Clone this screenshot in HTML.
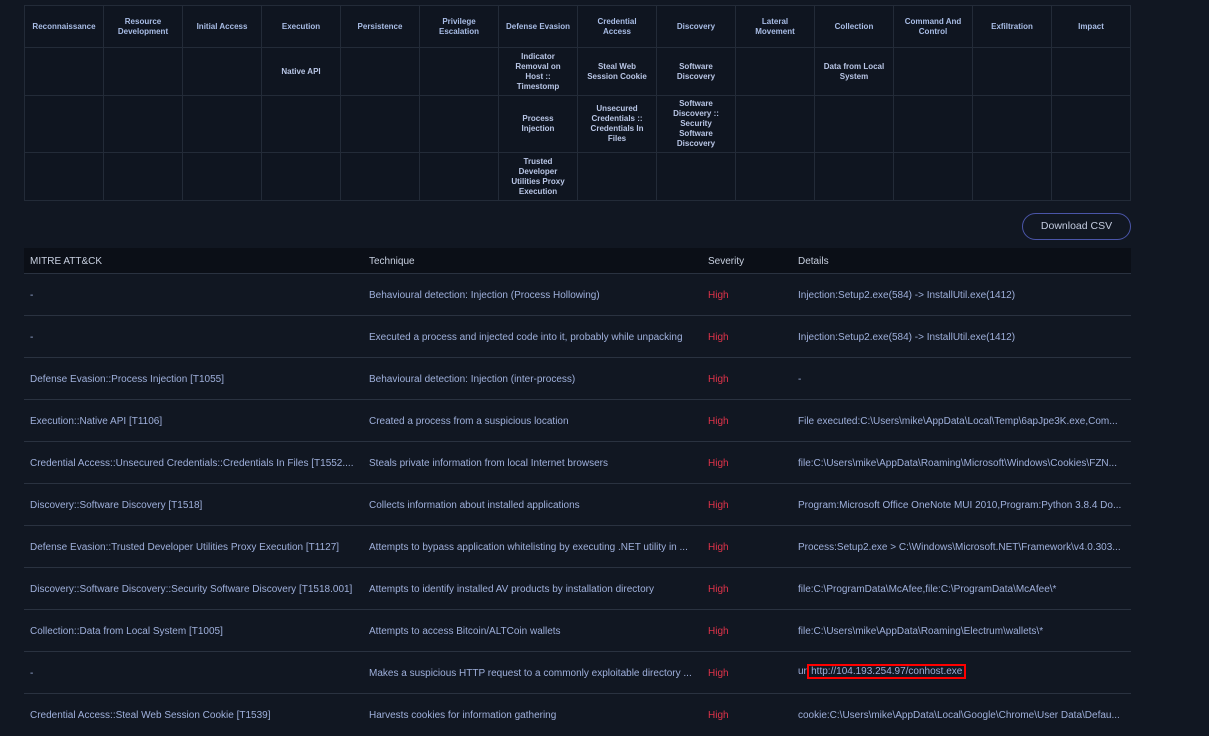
<!DOCTYPE html>
<html><head><meta charset="utf-8"><style>
*{margin:0;padding:0;box-sizing:border-box}
body{width:1209px;height:730px;overflow:hidden;background:#111722;font-family:"Liberation Sans",sans-serif;position:relative}
table.m{position:absolute;left:24px;top:5px;border-collapse:collapse;width:1107px;table-layout:fixed;background:#0f1520}
table.m td{border:1px solid #232b38;text-align:center;vertical-align:middle;color:#b9c6e6;font-size:8px;font-weight:bold;line-height:10px;padding:0 2px;white-space:nowrap}
table.m tr:first-child td{color:#a9bde6}
.btn{position:absolute;left:1022px;top:213px;width:109px;height:27px;border:1px solid #4a55a8;border-radius:14px;color:#c4cce0;font-size:10.5px;text-align:center;line-height:25px}
.r{position:absolute;left:24px;width:1107px;border-bottom:1px solid #2a3240;font-size:10px;color:#9fb0dc;white-space:nowrap}
.r span{position:absolute;top:0}
.h{background:#0b0f17;color:#c8d0e0;font-size:10px}
.hi{color:#e0334a}
.box{border:2px solid #f00;padding:0 2px;margin-left:-2px}
</style></head><body>
<table class="m">
<tr style="height:42px"><td>Reconnaissance</td><td>Resource<br>Development</td><td>Initial Access</td><td>Execution</td><td>Persistence</td><td>Privilege<br>Escalation</td><td>Defense Evasion</td><td>Credential<br>Access</td><td>Discovery</td><td>Lateral<br>Movement</td><td>Collection</td><td>Command And<br>Control</td><td>Exfiltration</td><td>Impact</td></tr>
<tr style="height:48px"><td></td><td></td><td></td><td>Native API</td><td></td><td></td><td>Indicator<br>Removal on<br>Host ::<br>Timestomp</td><td>Steal Web<br>Session Cookie</td><td>Software<br>Discovery</td><td></td><td>Data from Local<br>System</td><td></td><td></td><td></td></tr>
<tr style="height:57px"><td></td><td></td><td></td><td></td><td></td><td></td><td>Process<br>Injection</td><td>Unsecured<br>Credentials ::<br>Credentials In<br>Files</td><td>Software<br>Discovery ::<br>Security<br>Software<br>Discovery</td><td></td><td></td><td></td><td></td><td></td></tr>
<tr style="height:48px"><td></td><td></td><td></td><td></td><td></td><td></td><td>Trusted<br>Developer<br>Utilities Proxy<br>Execution</td><td></td><td></td><td></td><td></td><td></td><td></td><td></td></tr>
</table>
<div class="btn">Download CSV</div>
<div class="r h" style="top:248px;height:26px"><span style="left:6px;top:8px">MITRE ATT&amp;CK</span><span style="left:345px;top:8px">Technique</span><span style="left:684px;top:8px">Severity</span><span style="left:774px;top:8px">Details</span></div>
<div class="r" style="top:274px;height:42px"><span style="left:6px;top:16px">-</span><span style="left:345px;top:16px">Behavioural detection: Injection (Process Hollowing)</span><span class="hi" style="left:684px;top:16px">High</span><span style="left:774px;top:16px">Injection:Setup2.exe(584) -&gt; InstallUtil.exe(1412)</span></div>
<div class="r" style="top:316px;height:42px"><span style="left:6px;top:16px">-</span><span style="left:345px;top:16px">Executed a process and injected code into it, probably while unpacking</span><span class="hi" style="left:684px;top:16px">High</span><span style="left:774px;top:16px">Injection:Setup2.exe(584) -&gt; InstallUtil.exe(1412)</span></div>
<div class="r" style="top:358px;height:42px"><span style="left:6px;top:16px">Defense Evasion::Process Injection [T1055]</span><span style="left:345px;top:16px">Behavioural detection: Injection (inter-process)</span><span class="hi" style="left:684px;top:16px">High</span><span style="left:774px;top:16px">-</span></div>
<div class="r" style="top:400px;height:42px"><span style="left:6px;top:16px">Execution::Native API [T1106]</span><span style="left:345px;top:16px">Created a process from a suspicious location</span><span class="hi" style="left:684px;top:16px">High</span><span style="left:774px;top:16px">File executed:C:\Users\mike\AppData\Local\Temp\6apJpe3K.exe,Com...</span></div>
<div class="r" style="top:442px;height:42px"><span style="left:6px;top:16px">Credential Access::Unsecured Credentials::Credentials In Files [T1552....</span><span style="left:345px;top:16px">Steals private information from local Internet browsers</span><span class="hi" style="left:684px;top:16px">High</span><span style="left:774px;top:16px">file:C:\Users\mike\AppData\Roaming\Microsoft\Windows\Cookies\FZN...</span></div>
<div class="r" style="top:484px;height:42px"><span style="left:6px;top:16px">Discovery::Software Discovery [T1518]</span><span style="left:345px;top:16px">Collects information about installed applications</span><span class="hi" style="left:684px;top:16px">High</span><span style="left:774px;top:16px">Program:Microsoft Office OneNote MUI 2010,Program:Python 3.8.4 Do...</span></div>
<div class="r" style="top:526px;height:42px"><span style="left:6px;top:16px">Defense Evasion::Trusted Developer Utilities Proxy Execution [T1127]</span><span style="left:345px;top:16px">Attempts to bypass application whitelisting by executing .NET utility in ...</span><span class="hi" style="left:684px;top:16px">High</span><span style="left:774px;top:16px">Process:Setup2.exe &gt; C:\Windows\Microsoft.NET\Framework\v4.0.303...</span></div>
<div class="r" style="top:568px;height:42px"><span style="left:6px;top:16px">Discovery::Software Discovery::Security Software Discovery [T1518.001]</span><span style="left:345px;top:16px">Attempts to identify installed AV products by installation directory</span><span class="hi" style="left:684px;top:16px">High</span><span style="left:774px;top:16px">file:C:\ProgramData\McAfee,file:C:\ProgramData\McAfee\*</span></div>
<div class="r" style="top:610px;height:42px"><span style="left:6px;top:16px">Collection::Data from Local System [T1005]</span><span style="left:345px;top:16px">Attempts to access Bitcoin/ALTCoin wallets</span><span class="hi" style="left:684px;top:16px">High</span><span style="left:774px;top:16px">file:C:\Users\mike\AppData\Roaming\Electrum\wallets\*</span></div>
<div class="r" style="top:652px;height:42px"><span style="left:6px;top:16px">-</span><span style="left:345px;top:16px">Makes a suspicious HTTP request to a commonly exploitable directory ...</span><span class="hi" style="left:684px;top:16px">High</span><span style="left:774px;top:14px">url<span class="box" style="position:static">http://104.193.254.97/conhost.exe</span></span></div>
<div class="r" style="top:694px;height:42px;border:none"><span style="left:6px;top:16px">Credential Access::Steal Web Session Cookie [T1539]</span><span style="left:345px;top:16px">Harvests cookies for information gathering</span><span class="hi" style="left:684px;top:16px">High</span><span style="left:774px;top:16px">cookie:C:\Users\mike\AppData\Local\Google\Chrome\User Data\Defau...</span></div>
</body></html>
